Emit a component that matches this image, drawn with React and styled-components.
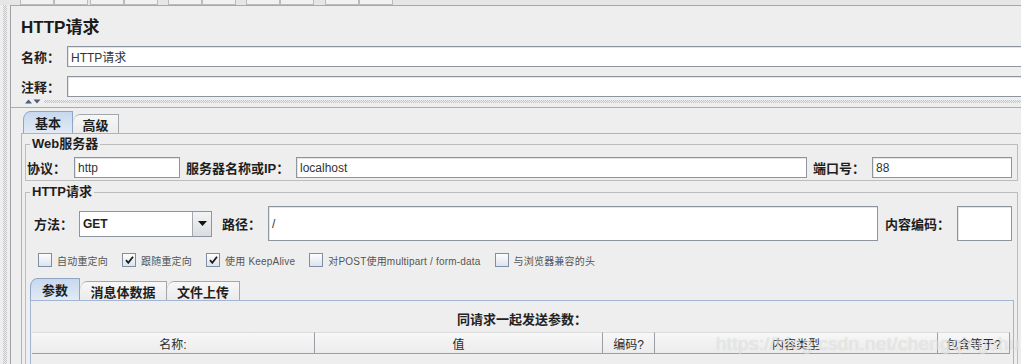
import React from 'react';
import styled, { createGlobalStyle } from 'styled-components';

const GlobalStyle = createGlobalStyle`
  *, *::before, *::after { box-sizing: border-box; }
  html, body { margin: 0; padding: 0; background: #eeeeee; }
  body { font-family: "Liberation Sans", "Noto Sans CJK SC", sans-serif; }
`

const Window = styled.div`
  position: relative;
  width: 1021px;
  height: 364px;
  overflow: hidden;
  display: flex;
  flex-direction: column;
  background: #eeeeee;
  color: #222;
  font-family: "Liberation Sans", "Noto Sans CJK SC", sans-serif;
`
const Toolbar = styled.div`
  flex: none;
  height: 5px;
  display: flex;
  padding-left: 20px;
  background: #e6e6e6;
`
const ToolGroup = styled.div`
  display: flex;
  margin-right: ${p => p.$gap}px;
`
const ToolButton = styled.div`
  width: 34px;
  border: 1px solid #b9bbbf;
  border-top: none;
  background: #f1f1f1;
`
const Body = styled.div`
  flex: 1;
  min-height: 0;
  display: flex;
`
const Splitter = styled.div`
  flex: none;
  width: 10px;
  padding: 0 3px;
  background: repeating-conic-gradient(#c6c6c6 0 25%, #eeeeee 0 50%) 0 0 / 2px 2px;
  background-clip: content-box;
`
const Panel = styled.div`
  flex: 1;
  min-width: 0;
  display: flex;
  flex-direction: column;
  border-left: 1px solid #9da1a8;
  border-top: 1px solid #a4a8b0;
  padding-left: 10px;
`
const Title = styled.div`
  margin-top: 10px;
  font-size: 17px;
  font-weight: bold;
  line-height: 24px;
  color: #1a1a1a;
`
const FieldRow = styled.div`
  display: flex;
  align-items: center;
  height: ${p => p.$h || 21}px;
  margin: ${p => p.$mt || 0}px ${p => p.$mr || 0}px 0 ${p => p.$ml || 0}px;
`
const Label = styled.span`
  flex: none;
  width: ${p => p.$w}px;
  margin-left: ${p => p.$ml || 0}px;
  font-size: 13px;
  font-weight: bold;
  white-space: nowrap;
  color: #1e1e1e;
`
const TextField = styled.div`
  height: ${p => p.$h || 21}px;
  width: ${p => (p.$w ? `${p.$w}px` : 'auto')};
  flex: ${p => (p.$w ? 'none' : 1)};
  min-width: 0;
  display: flex;
  align-items: center;
  padding-left: 3px;
  background: #fff;
  border: 1px solid #8f959e;
  box-shadow: inset 1px 1px 0 #e3e5e9;
  font-size: 12px;
  color: #333;
  white-space: nowrap;
  overflow: hidden;
`
const SplitBar = styled.div`
  flex: none;
  height: 14px;
  margin-left: -10px;
  padding-top: 3px;
`
const DotRow = styled.div`
  height: 3px;
  display: flex;
  align-items: center;
  padding-left: 14px;
`
const Dots = styled.div`
  flex: 1;
  height: 3px;
  margin-left: 3px;
  background: repeating-conic-gradient(#c2c4c8 0 25%, #eeeeee 0 50%) 0 0 / 2px 2px;
`
const SplitLine = styled.div`
  height: 1px;
  margin-top: 4px;
  background: #a8acb3;
`
const TabStrip = styled.div`
  flex: none;
  display: flex;
  align-items: flex-end;
  height: 22px;
  padding-left: ${p => p.$pl || 0}px;
`
const Tab = styled.div`
  width: ${p => p.$w}px;
  height: ${p => (p.$active ? 22 : 19)}px;
  display: flex;
  align-items: center;
  justify-content: center;
  border: 1px solid ${p => (p.$active ? '#8ea5c6' : '#a2a7af')};
  border-bottom: none;
  border-left-width: ${p => (p.$first ? 1 : 0)}px;
  border-top-left-radius: 7px 9px;
  background: ${p => (p.$active ? 'linear-gradient(#c7d8ee, #e2eaf5)' : 'linear-gradient(#f7f7f7, #ebebeb)')};
  font-size: 13px;
  font-weight: bold;
  color: #1e1e1e;
`
const TabBody = styled.div`
  flex: 1;
  min-height: 0;
  display: flex;
  flex-direction: column;
  border-top: 1px solid #a2b6d4;
  border-left: 1px solid #a2b6d4;
  padding: 2px 3px 0 3px;
`
const Group = styled.fieldset`
  flex: ${p => (p.$grow ? 1 : 'none')};
  min-width: 0;
  margin: ${p => p.$mt || 0}px 0 0 0;
  padding: ${p => p.$pt}px 0 ${p => p.$pb}px 0;
  border: 1px solid #bdbdbd;
  border-bottom-width: ${p => (p.$grow ? 0 : 1)}px;
  display: flex;
  flex-direction: column;
`
const Legend = styled.legend`
  margin-left: 4px;
  padding: 0 2px;
  font-size: 13px;
  font-weight: bold;
  line-height: 16px;
  color: #1e1e1e;
`
const Combo = styled.div`
  flex: none;
  width: ${p => p.$w}px;
  height: 26px;
  display: flex;
  background: #fff;
  border: 1px solid #8f959e;
  font-size: 12px;
  font-weight: bold;
  color: #222;
`
const ComboText = styled.div`
  flex: 1;
  display: flex;
  align-items: center;
  padding-left: 3px;
`
const ComboArrow = styled.div`
  width: 19px;
  display: flex;
  align-items: center;
  justify-content: center;
  border-left: 1px solid #a3a8ae;
  background: linear-gradient(#f4f4f4, #dadde1);
`
const CheckRow = styled.div`
  display: flex;
  align-items: center;
  gap: 14px;
  height: 14px;
  margin: 12px 0 0 12px;
`
const CheckItem = styled.div`
  display: flex;
  align-items: center;
  gap: 5px;
  font-size: 10px;
  letter-spacing: 0.2px;
  color: #555;
  white-space: nowrap;
`
const CheckBox = styled.span`
  width: 14px;
  height: 14px;
  display: flex;
  align-items: center;
  justify-content: center;
  border: 1px solid #7e8ea3;
  background: linear-gradient(#fdfdfd, #dde4ee);
`
const InnerTabs = styled(TabStrip)`
  margin-top: 11px;
  padding-left: 4px;
`
const InnerBody = styled.div`
  flex: 1;
  margin: 0 3px 0 4px;
  padding: 0 1px;
  border: 1px solid #a2b6d4;
  border-bottom: none;
`
const Caption = styled.div`
  margin-top: 10px;
  height: 18px;
  line-height: 18px;
  text-align: center;
  font-size: 13px;
  font-weight: bold;
  color: #222;
`
const HeaderRow = styled.div`
  margin-top: 3px;
  display: grid;
  grid-template-columns: 283px 288px 52px 283px 72px;
  height: 22px;
`
const HeaderCell = styled.div`
  display: flex;
  align-items: center;
  justify-content: center;
  border-top: 1px solid #dcdcdc;
  border-right: 1px solid #9a9ea5;
  border-bottom: 1px solid #9a9ea5;
  background: linear-gradient(#f7f7f7, #ececec);
  font-size: 12px;
  color: #2a2a2a;
  white-space: nowrap;
`
const Watermark = styled.div`
  position: absolute;
  left: 716px;
  top: 333px;
  font-size: 19px;
  letter-spacing: 0.3px;
  color: rgba(255, 255, 255, 0.55);
  text-shadow: 0 0 1px rgba(130, 130, 130, 0.4);
  pointer-events: none;
  white-space: nowrap;
`

const SplitArrows = () => (
  <svg width="16" height="5" viewBox="0 0 16 5">
    <path d="M0 4.5 L3.5 0.5 L7 4.5 Z" fill="#4b5d7d" />
    <path d="M8.5 0.5 L15.5 0.5 L12 4.5 Z" fill="#4b5d7d" />
  </svg>
)

const DownTriangle = () => (
  <svg width="9" height="5" viewBox="0 0 9 5">
    <path d="M0 0 L9 0 L4.5 5 Z" fill="#111" />
  </svg>
)

const Check = ({ checked }) => (
  <CheckBox>
    {checked ? (
      <svg width="9" height="8" viewBox="0 0 9 8">
        <path d="M1 4.2 L3.3 6.8 L8 0.8" stroke="#1d1d1d" strokeWidth="1.8" fill="none" />
      </svg>
    ) : null}
  </CheckBox>
)

const toolGroups = [2, 10, 10, 11, 0];
const options = [
  { text: '自动重定向', checked: false },
  { text: '跟随重定向', checked: true },
  { text: '使用 KeepAlive', checked: true },
  { text: '对POST使用multipart / form-data', checked: false },
  { text: '与浏览器兼容的头', checked: false },
];
const columns = ['名称:', '值', '编码?', '内容类型', '包含等于?'];

export default function App() {
  return (
    <Window>
      <GlobalStyle />
      <Toolbar>
        {toolGroups.map((gap, i) => (
          <ToolGroup key={i} $gap={gap}>
            <ToolButton />
            <ToolButton />
          </ToolGroup>
        ))}
      </Toolbar>
      <Body>
        <Splitter />
        <Panel>
          <Title>HTTP请求</Title>
          <FieldRow $mt={6} $mr={-10}>
            <Label $w={46}>名称：</Label>
            <TextField>HTTP请求</TextField>
          </FieldRow>
          <FieldRow $mt={9} $mr={-10}>
            <Label $w={46}>注释：</Label>
            <TextField />
          </FieldRow>
          <SplitBar>
            <DotRow>
              <SplitArrows />
              <Dots />
            </DotRow>
            <SplitLine />
          </SplitBar>
          <TabStrip $pl={2}>
            <Tab $w={50} $active $first>基本</Tab>
            <Tab $w={46}>高级</Tab>
          </TabStrip>
          <TabBody>
            <Group $pt={5} $pb={2}>
              <Legend>Web服务器</Legend>
              <FieldRow $ml={1} $mr={5}>
                <Label $w={47}>协议：</Label>
                <TextField $w={106}>http</TextField>
                <Label $w={110} $ml={6}>服务器名称或IP：</Label>
                <TextField>localhost</TextField>
                <Label $w={59} $ml={6}>端口号：</Label>
                <TextField $w={140}>88</TextField>
              </FieldRow>
            </Group>
            <Group $mt={3} $pt={6} $pb={0} $grow>
              <Legend>HTTP请求</Legend>
              <FieldRow $h={35} $ml={8} $mr={5}>
                <Label $w={45}>方法：</Label>
                <Combo $w={133}>
                  <ComboText>GET</ComboText>
                  <ComboArrow>
                    <DownTriangle />
                  </ComboArrow>
                </Combo>
                <Label $w={46} $ml={10}>路径：</Label>
                <TextField $h={35}>/</TextField>
                <Label $w={72} $ml={7}>内容编码：</Label>
                <TextField $w={55} $h={35} />
              </FieldRow>
              <CheckRow>
                {options.map(o => (
                  <CheckItem key={o.text}>
                    <Check checked={o.checked} />
                    {o.text}
                  </CheckItem>
                ))}
              </CheckRow>
              <InnerTabs>
                <Tab $w={50} $active $first>参数</Tab>
                <Tab $w={87}>消息体数据</Tab>
                <Tab $w={73}>文件上传</Tab>
              </InnerTabs>
              <InnerBody>
                <Caption>同请求一起发送参数：</Caption>
                <HeaderRow>
                  {columns.map(c => (
                    <HeaderCell key={c}>{c}</HeaderCell>
                  ))}
                </HeaderRow>
              </InnerBody>
            </Group>
          </TabBody>
        </Panel>
      </Body>
      <Watermark>https://blog.csdn.net/chengqingshu</Watermark>
    </Window>
  );
}
